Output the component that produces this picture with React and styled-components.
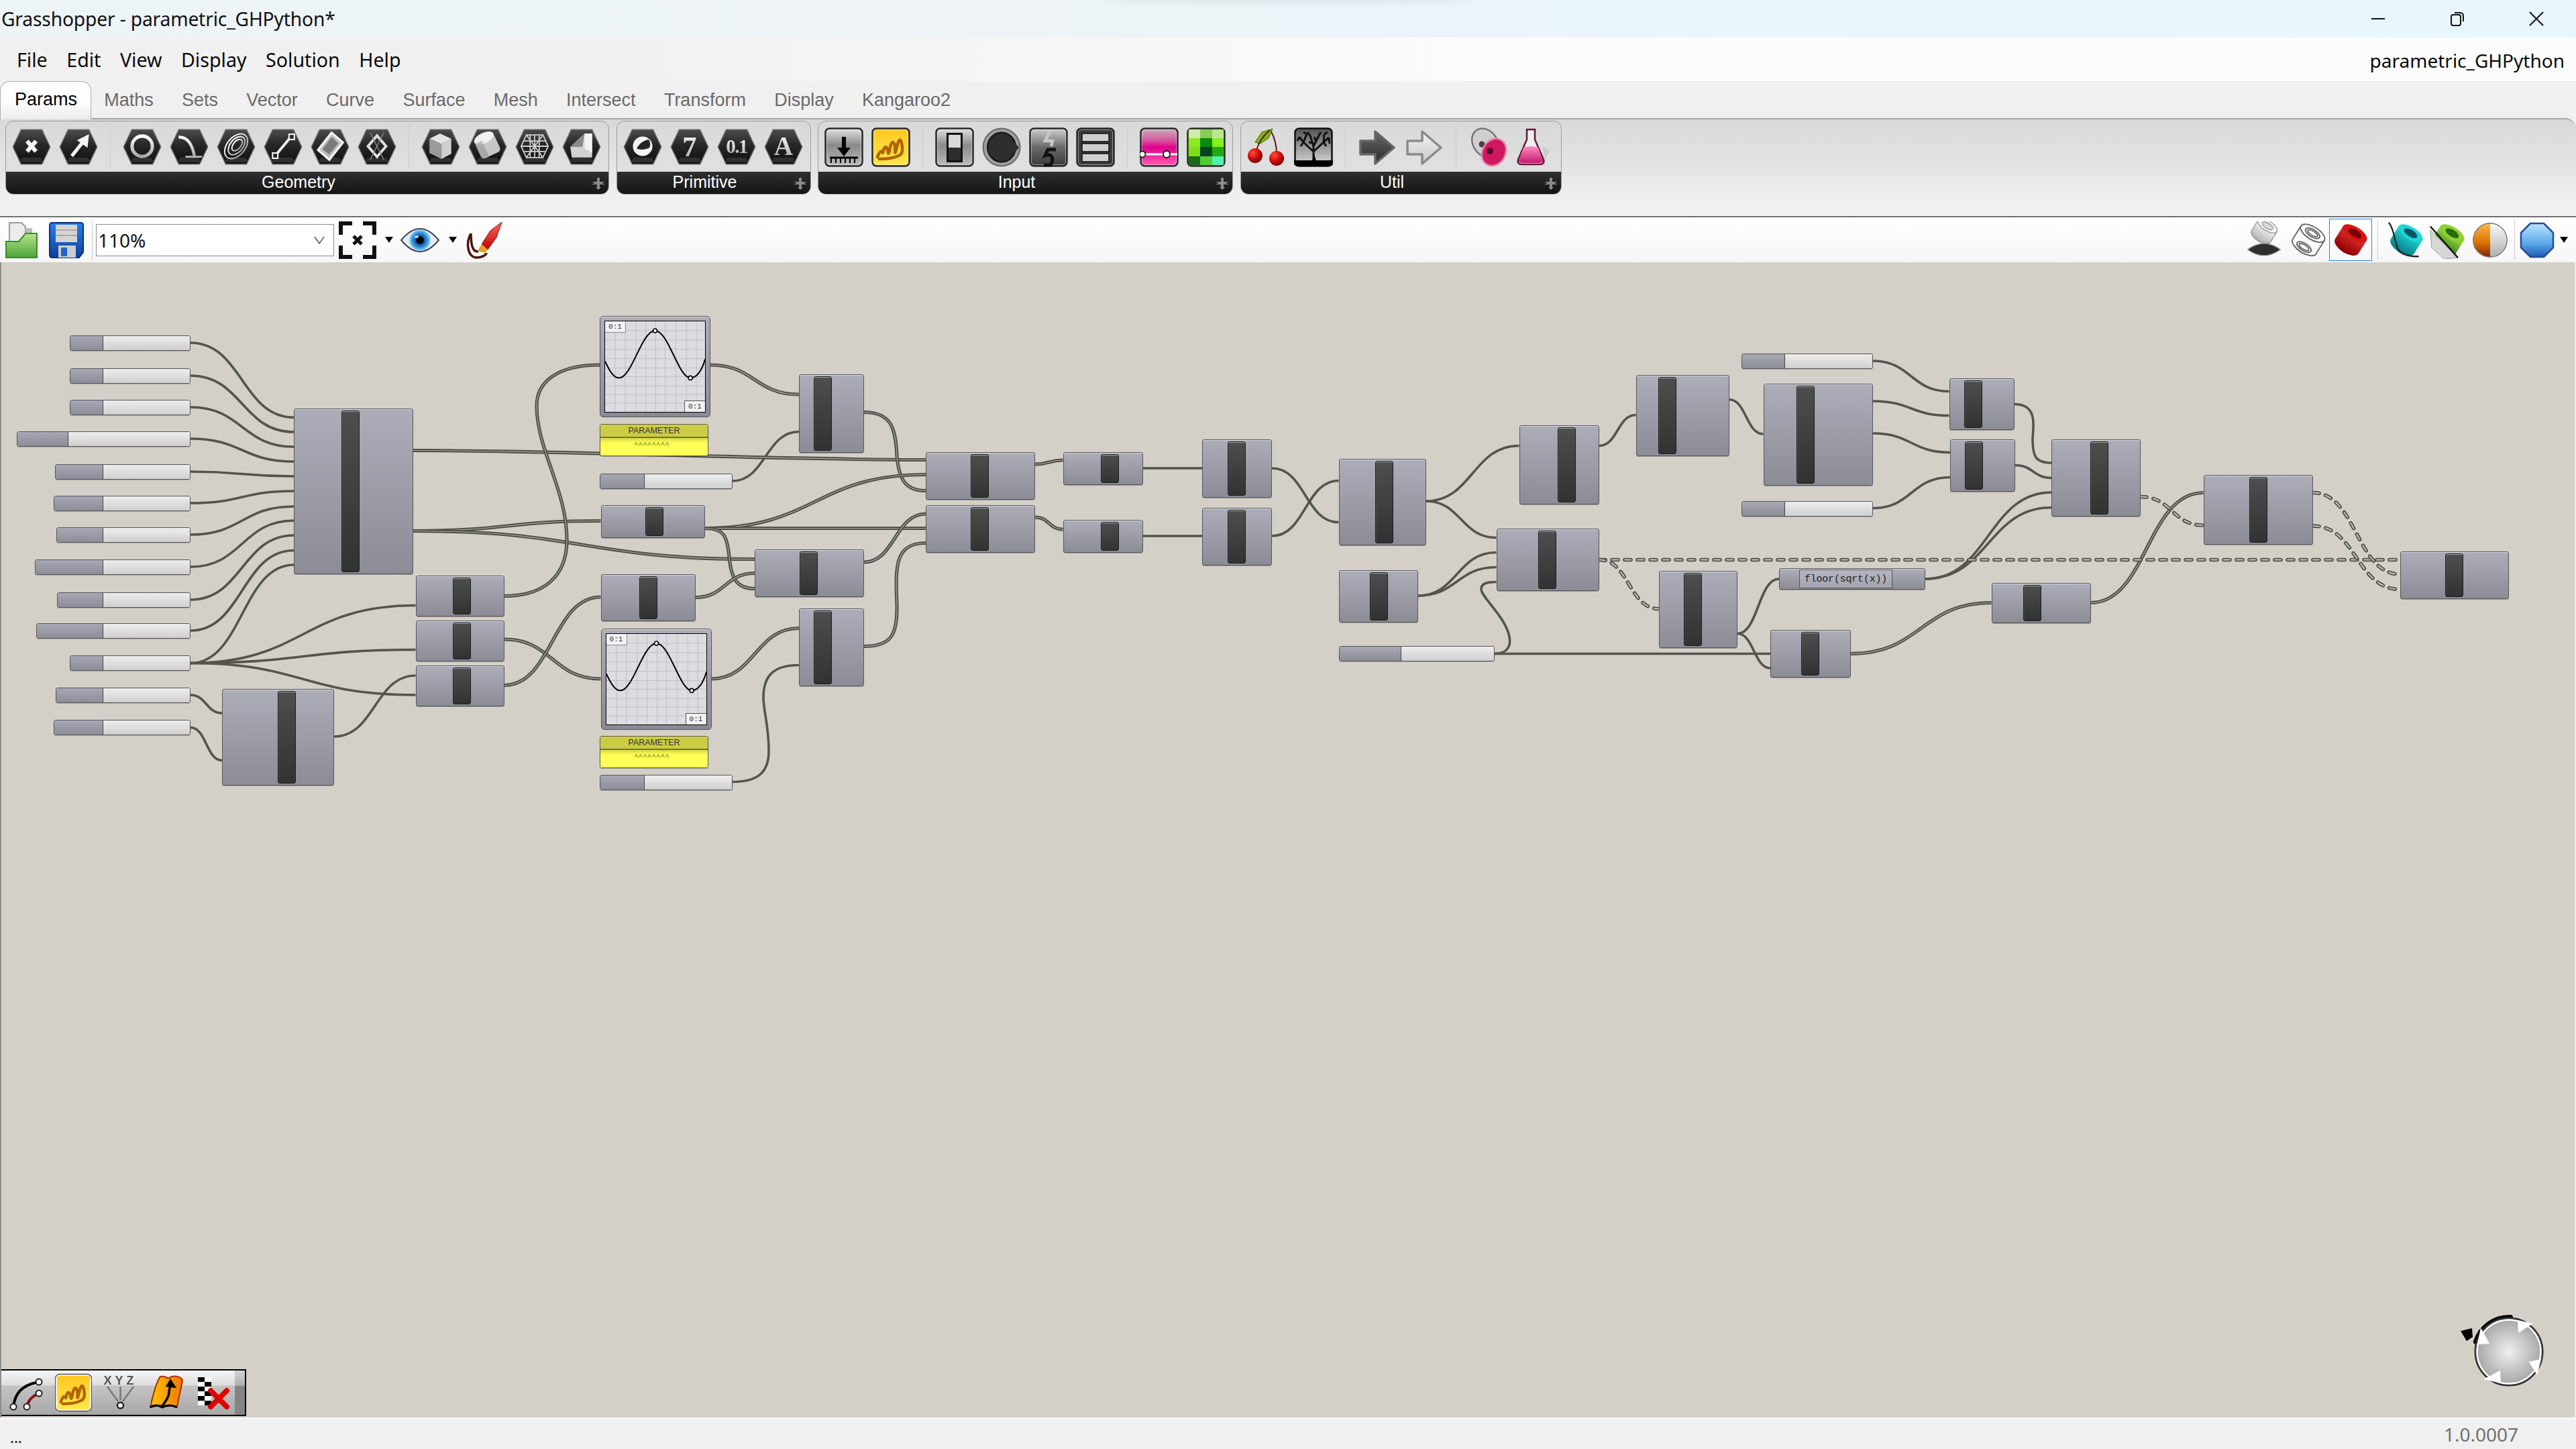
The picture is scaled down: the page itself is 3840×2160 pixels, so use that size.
import React from "react";
import styled, { createGlobalStyle } from "styled-components";

const Global = createGlobalStyle`
  html, body { margin: 0; padding: 0; width: 3840px; height: 2160px; overflow: hidden; background: #f0f0f0; }
  body { font-family: "Noto Sans", "Open Sans", sans-serif; }
`;

const CANVAS_TOP = 391;

const Window = styled.div`
  width: 3840px; height: 2160px; display: flex; flex-direction: column; overflow: hidden; position: relative;
`;
const TitleBar = styled.header`
  height: 56px; flex: none; display: flex; align-items: center; position: relative; overflow: hidden;
  background: linear-gradient(90deg, #edf4f8 0%, #eef4f8 40%, #e8f6fb 75%, #e7f7fb 100%);
  &::before {
    content: ""; position: absolute; left: 1640px; top: -10px; width: 560px; height: 14px;
    background: rgba(120,130,130,.16); filter: blur(6px); border-radius: 50%;
  }
`;
const TitleText = styled.span`
  margin-left: 2px; font-size: 28.2px; color: #111; line-height: 58px; white-space: nowrap; letter-spacing: -.15px;
`;
const WinControls = styled.div`
  margin-left: auto; display: flex; align-items: center; gap: 96px; padding-right: 48px;
`;
const WinIcon = styled.svg`
  width: 22px; height: 22px; fill: none; stroke: #111; stroke-width: 2; display: block;
`;
const MenuBar = styled.nav`
  height: 65px; flex: none; box-sizing: border-box; display: flex; align-items: center; padding: 2px 0 0 25px; gap: 28.5px; font-size: 28.6px; color: #0a0a0a;
  background: linear-gradient(90deg, #f0f0f0 0%, #f1f1f1 24%, #fcfcfc 60%, #fcfcfc 100%);
`;
const MenuItem = styled.span` line-height: 1; `;
const MenuRight = styled.span` margin-left: auto; padding-right: 17px; font-size: 28px; `;
const Tabs = styled.div`
  height: 55px; flex: none; display: flex; background: #f0f0f0; font-family: "Liberation Sans", Arial, sans-serif; font-size: 27px; position: relative; z-index: 2;
`;
const Tab = styled.div`
  height: ${p => (p.$active ? 57 : 55)}px; box-sizing: border-box; display: flex; align-items: center;
  padding: ${p => (p.$active ? "0 21px 4px 21px" : "1px 21.15px 0 21.15px")}; margin-right: ${p => (p.$active ? -2 : 0)}px;
  color: ${p => (p.$active ? "#000" : "#6a6a6a")};
  ${p => p.$active && `
    background: linear-gradient(180deg, #fff 0%, #fdfdfd 55%, #eaeaea 100%);
    border: 1px solid #aeaeae; border-bottom: none; border-radius: 14px 14px 0 0; width: 136px;
  `}
`;
const Ribbon = styled.section`
  height: 146px; flex: none; box-sizing: border-box; border-top: 2px solid #a6a6a6; border-top-right-radius: 16px;
  background: linear-gradient(180deg, #d8d8d8 0%, #e6e6e6 55%, #f0f0f0 82%, #f0f0f0 100%);
  padding: 2px 0 0 8px; display: flex; gap: 10.5px; align-items: flex-start;
`;
const Group = styled.div`
  width: ${p => p.$w}px; height: 110px; box-sizing: border-box; border: 1px solid #9c9c9c; border-radius: 12px; overflow: hidden;
  display: flex; flex-direction: column; background: linear-gradient(180deg, #d9d9d9, #e3e3e3);
`;
const GroupBody = styled.div`
  height: 75px; flex: none; display: flex; align-items: center; padding-left: ${p => p.$pad || 9}px;
`;
const Section = styled.div` display: flex; gap: ${p => p.$gap ?? 12}px; `;
const Sep = styled.i` width: 1px; height: 66px; background: #cbcbcb; margin: 0 ${p => p.$m ?? 18}px; flex: none; `;
const GroupFoot = styled.div`
  flex: 1; display: flex; align-items: center; justify-content: center; padding: 0 26px 3px 0; position: relative;
  background: linear-gradient(180deg, #2f2f2f, #141414); color: #fff; font-family: "Liberation Sans", Arial, sans-serif; font-size: 25px;
`;
const FootPlus = styled.svg`
  position: absolute; right: 6px; top: 9px; width: 18px; height: 18px; fill: #8b8b8b; filter: blur(.5px);
`;
const HexSvg = styled.svg`
  width: 58px; height: 54px; display: block; flex: none; filter: blur(.45px);
`;
const BtnSvg = styled.svg`
  width: 58px; height: 59px; display: block; flex: none; filter: blur(.4px); margin-top: 2px;
`;
const Toolbar = styled.div`
  height: 69px; flex: none; box-sizing: border-box; border-top: 2px solid #707070; display: flex; align-items: center; padding-left: 8px; position: relative;
  background: linear-gradient(180deg, #fff 0%, #f6f6f6 100%);
`;
const ToolIcon = styled.svg`
  width: ${p => p.$w}px; height: ${p => p.$h || 56}px; display: block; flex: none; margin-left: ${p => p.$ml || 0}px; filter: blur(.4px);
`;
const ToolSep = styled.i` width: 1px; height: 60px; background: #cfcfcf; flex: none; margin-left: ${p => p.$ml || 0}px; `;
const Combo = styled.div`
  width: 355px; height: 48px; box-sizing: border-box; margin-left: 5px; border: 1px solid #8d8d8d; background: #fff; position: relative;
  display: flex; align-items: center; padding-left: 2px; font-size: 28px; color: #111; font-family: "Noto Sans", sans-serif;
`;
const ComboChevron = styled.svg`
  position: absolute; right: 13px; top: 15px; width: 16px; height: 16px; fill: none; stroke: #555; stroke-width: 1.5;
`;
const Drop = styled.i`
  width: 0; height: 0; border: 6px solid transparent; border-top: 9px solid #000; border-bottom: none; flex: none; margin-left: ${p => p.$ml || 0}px;
`;
const ToolRight = styled.div` margin-left: auto; display: flex; align-items: center; padding-right: 12px; `;
const Selected = styled.div`
  width: 64px; height: 63px; box-sizing: border-box; border: 1px solid #1e88e5; display: flex; align-items: center; justify-content: center; margin-left: 1px;
`;
const Canvas = styled.main`
  flex: 1; position: relative; overflow: hidden; background: #d4d0c8;
  box-shadow: inset 2px 0 0 #8d8d8d, inset -2px 0 0 #ececec;
`;
const WireLayer = styled.svg`
  position: absolute; left: 0; top: 0; width: 3840px; height: 1722px; fill: none;
`;
const NodeBox = styled.div`
  position: absolute; left: ${p => p.$x}px; top: ${p => p.$y}px; width: ${p => p.$w}px; height: ${p => p.$h}px; box-sizing: border-box;
  background: linear-gradient(180deg, #adadb9 0%, #8c8c97 100%);
  border: 1px solid #55555a; border-radius: 3px; padding: 2px 0;
  box-shadow: inset 0 1px 0 rgba(255,255,255,.55), 0 1px 0 rgba(60,60,60,.35);
`;
const Bar = styled.div`
  margin-left: ${p => p.$o}px; width: 27px; height: 100%; box-sizing: border-box; border: 1px solid #1c1c1c; border-radius: 3px;
  background: linear-gradient(180deg, #4e4e4e 0%, #323232 100%); box-shadow: inset 0 1px 0 rgba(255,255,255,.5), inset 1px 0 0 rgba(255,255,255,.08);
`;
const SliderBox = styled.div`
  position: absolute; left: ${p => p.$x}px; top: ${p => p.$y}px; width: ${p => p.$w}px; height: ${p => p.$h}px; box-sizing: border-box;
  border: 1px solid #55555a; border-radius: 3px; overflow: hidden; display: flex;
  box-shadow: 0 1px 0 rgba(60,60,60,.25);
`;
const SliderLeft = styled.div`
  width: ${p => p.$w}px; flex: none; border-right: 1px solid #444; background: linear-gradient(180deg, #a8a8b4, #8d8d99);
`;
const SliderRight = styled.div` flex: 1; background: linear-gradient(180deg, #ededed, #cfcfcf); `;
const GraphBox = styled.div`
  position: absolute; left: ${p => p.$x}px; top: ${p => p.$y}px; width: 165px; height: 151px; box-sizing: border-box;
  border: 1px solid #55555a; border-radius: 5px; padding: 6px; display: flex;
  background: linear-gradient(180deg, #aeaeba, #898995); box-shadow: inset 0 1px 0 rgba(255,255,255,.6);
`;
const GraphFrame = styled.div`
  flex: 1; position: relative; border: 1.5px solid #000; background: #dcdce1; font-family: "Liberation Mono", monospace; font-size: 11px; color: #333;
`;
const GraphTag = styled.span`
  position: absolute; width: 31px; height: 17px; box-sizing: border-box; background: #f1f1f3; display: flex; align-items: center; justify-content: center; letter-spacing: 0;
  ${p => (p.$end ? "right: 0; bottom: 0; border-top: 1px solid #555; border-left: 1px solid #555;" : "left: 0; top: 0; border-bottom: 1px solid #888; border-right: 1px solid #888;")}
`;
const GraphPlot = styled.svg` position: absolute; inset: 0; width: 100%; height: 100%; fill: none; `;
const PanelBox = styled.div`
  position: absolute; left: ${p => p.$x}px; top: ${p => p.$y}px; width: 162px; height: 48px; box-sizing: border-box; border: 1px solid #5f5f45; border-radius: 3px; overflow: hidden;
  display: flex; flex-direction: column; text-align: center; font-family: "Liberation Sans", sans-serif; box-shadow: 0 1px 1px rgba(60,60,60,.35);
`;
const PanelHead = styled.div`
  height: 20px; flex: none; box-sizing: border-box; background: #cccb47; border-bottom: 2px solid #74742c; font-size: 12.5px; line-height: 18px; color: #333;
`;
const PanelBody = styled.div`
  flex: 1; background: linear-gradient(180deg, #d6d64c 0%, #ffff55 30%, #ffff55 100%); font-size: 12px; line-height: 22px; color: #6f8a10; letter-spacing: 1px; padding-right: 6px;
`;
const ExprBox = styled(NodeBox)` padding: 1px 0; `;
const ExprInner = styled.div`
  margin-left: 29px; width: 139px; height: 100%; box-sizing: border-box; border: 1px solid #55555a; background: linear-gradient(180deg, #b6b6c2, #a4a4b0);
  font-family: "Liberation Mono", monospace; font-size: 15px; color: #222; display: flex; align-items: center; justify-content: center; letter-spacing: -.2px;
`;
const Floating = styled.div`
  position: absolute; left: 2px; bottom: 2px; width: 365px; height: 70px; box-sizing: border-box; border: 2px solid #000; border-left: none; display: flex; align-items: center; padding-left: 10px; gap: 15px;
  background: linear-gradient(180deg, #f7f7f7 0%, #dcdcdc 33%, #c4c4c4 35%, #a8a8a8 100%);
  &::after { content: ""; position: absolute; right: 0; top: 0; bottom: 0; width: 15px; background: linear-gradient(180deg, #d4d4d4 0%, #b0b0b0 34%, #858585 35%, #858585 100%); }
`;
const FloatIcon = styled.svg` width: 55px; height: 58px; flex: none; display: block; filter: blur(.5px); `;
const Compass = styled.svg` position: absolute; left: 3660px; top: ${1950 - CANVAS_TOP}px; width: 140px; height: 130px; `;
const StatusBar = styled.footer`
  height: 47px; flex: none; box-sizing: border-box; border-top: 2px solid #fafafa; background: #f0f0f0; display: flex; align-items: center; padding: 0 86px 0 15px; justify-content: space-between; font-size: 28px;
`;
const StatusDots = styled.span` color: #111; font-size: 22px; letter-spacing: 0; margin-top: 8px; `;
const StatusVersion = styled.span` color: #707070; `;

const Defs = styled.svg` position: absolute; width: 0; height: 0; `;

const grad = (id, stops, x2 = 0, y2 = 1) => (
  <linearGradient id={id} x1="0" y1="0" x2={x2} y2={y2} key={id}>
    {stops.map(([o, c], i) => <stop key={i} offset={o} stopColor={c} />)}
  </linearGradient>
);

const SharedDefs = () => (
  <Defs aria-hidden="true">
    <defs>
      {grad("hexF", [[0, "#4a4a4a"], [.45, "#262626"], [1, "#0f0f0f"]])}
      {grad("hexG", [[0, "#ffffff"], [1, "#a8a8a8"]])}
      {grad("btnG", [[0, "#e2e2e2"], [.45, "#8a8a8a"], [1, "#bcbcbc"]])}
      {grad("yel", [[0, "#ffc820"], [1, "#ffe850"]])}
      {grad("pink", [[0, "#c9b0bd"], [.3, "#d65ba0"], [.5, "#e0008c"], [1, "#ff60b4"]])}
      {grad("grayDown", [[0, "#cfcfcf"], [.5, "#6a6a6a"], [1, "#3a3a3a"]])}
      {grad("treeB", [[0, "#525252"], [.5, "#9a9a9a"], [1, "#dcdcdc"]])}
      {grad("arrD", [[0, "#666"], [1, "#2c2c2c"]])}
      {grad("arrL", [[0, "#f2f2f2"], [1, "#c8c8c8"]])}
      {grad("red", [[0, "#e83030"], [1, "#8a0000"]])}
      {grad("teal", [[0, "#1fd6d6"], [1, "#067a80"]])}
      {grad("green", [[0, "#9ee040"], [1, "#1d6a0a"]])}
      {grad("silver", [[0, "#fafafa"], [1, "#b0b0b0"]])}
      {grad("orange", [[0, "#ffb84a"], [.6, "#d87000"], [1, "#7e2400"]])}
      {grad("blue", [[0, "#bfe4ff"], [.6, "#5aa8ea"], [1, "#1e5cb4"]])}
      {grad("flaskP", [[0, "#ff8ec4"], [1, "#c8186e"]])}
      {grad("map", [[0, "#ffc400"], [1, "#f07800"]], 1, 0)}
      {grad("folderG", [[0, "#b8e48a"], [1, "#4aa436"]])}
      {grad("floppy", [[0, "#2a80e8"], [1, "#0d3f9c"]])}
      {grad("brush", [[0, "#ff6a5a"], [1, "#c00000"]])}
      <radialGradient id="cmp" cx=".5" cy=".5" r=".5">
        <stop offset="0" stopColor="#f0f0f0" /><stop offset="1" stopColor="#a4a4a4" />
      </radialGradient>
      <radialGradient id="iris" cx=".5" cy=".5" r=".5">
        <stop offset="0" stopColor="#000" /><stop offset=".3" stopColor="#000" /><stop offset=".42" stopColor="#1a5ab0" /><stop offset=".75" stopColor="#3aa0e0" /><stop offset="1" stopColor="#a8dcf4" />
      </radialGradient>
      <radialGradient id="cher" cx=".35" cy=".3" r=".7">
        <stop offset="0" stopColor="#ff5040" /><stop offset=".6" stopColor="#d00808" /><stop offset="1" stopColor="#7a0000" />
      </radialGradient>
    </defs>
  </Defs>
);

const Hex = ({ children }) => (
  <HexSvg viewBox="0 0 58 54">
    <polygon points="13,0.5 45,0.5 57.5,27 45,53.5 13,53.5 0.5,27" fill="#6b6b6b" />
    <polygon points="14,2 44,2 56,27 44,52 14,52 2,27" fill="url(#hexF)" />
    <polygon points="15,43 43,43 47,50 11,50" fill="#3a3a3a" opacity=".75" />
    <g transform="translate(29 26) scale(1.12) translate(-29 -27)">{children}</g>
  </HexSvg>
);

const S = { stroke: "url(#hexG)", fill: "none" };
const geo = [
  <g key="x" stroke="#f4f4f4" strokeWidth="5.5"><path d="M23 20L35 34M35 20L23 34" /></g>,
  <g key="a"><path d="M20 40L36 20" stroke="#f4f4f4" strokeWidth="4.5" /><polygon points="43,11 41,29 27,19" fill="#f4f4f4" /></g>,
  <circle key="c" cx="29" cy="27" r="13.5" {...S} strokeWidth="4.5" />,
  <g key="arc"><path d="M15 15C26 14 33 24 36 40" {...S} strokeWidth="4" /><path d="M24 41L46 41" stroke="#bbb" strokeWidth="2.5" /></g>,
  <g key="sp" {...S} strokeWidth="1.8" transform="rotate(-50 29 27)"><ellipse cx="29" cy="27" rx="19" ry="12" /><ellipse cx="30" cy="27" rx="14" ry="8.5" /><ellipse cx="31" cy="27" rx="9" ry="5" /></g>,
  <g key="seg"><path d="M19 39L39 15" stroke="#eee" strokeWidth="3.5" /><rect x="37" y="11" width="7" height="7" fill="#222" stroke="#eee" strokeWidth="2" /><rect x="15" y="36" width="7" height="7" fill="#222" stroke="#eee" strokeWidth="2" /></g>,
  <g key="srf"><polygon points="31,9 46,22 28,45 13,32" fill="#bcbcbc" stroke="#f2f2f2" strokeWidth="3" /><polygon points="31,15 40,23 28,38 19,31" fill="#7c7c7c" /></g>,
  <g key="dia" fill="none" stroke="#e0e0e0"><polygon points="29,13 41,27 29,41 17,27" strokeWidth="3.5" /><path d="M20 9L38 45M38 9L20 45" strokeWidth="1.2" stroke="#888" /></g>,
  <g key="box"><polygon points="14,17 28,10 43,17 30,24" fill="#e4e4e4" /><polygon points="14,17 30,24 30,44 14,36" fill="#9a9a9a" /><polygon points="30,24 43,17 43,37 30,44" fill="#d0d0d0" /></g>,
  <g key="cyl" transform="rotate(-25 29 27)"><rect x="15" y="14" width="28" height="26" rx="5" fill="#c6c6c6" /><ellipse cx="29" cy="15" rx="14" ry="7" fill="#f0f0f0" /><rect x="15" y="17" width="10" height="22" fill="#8a8a8a" opacity=".5" /></g>,
  <g key="msh" stroke="#cfcfcf" strokeWidth="1.6" fill="none"><polygon points="18,12 40,12 47,27 40,42 18,42 11,27" /><path d="M11 27H47M15 20H43M15 34H43M23 12V42M29 12V42M35 12V42M18 12L40 42M40 12L18 42" /></g>,
  <g key="wed"><polygon points="33,10 43,10 43,42 16,42 14,28" fill="#d2d2d2" /><polygon points="33,10 14,28 30,28" fill="#8a8a8a" /><polygon points="33,10 43,10 43,36 33,30" fill="#f2f2f2" /></g>,
];
const T = styled.text` font-family: "Liberation Serif", serif; font-weight: 700; `;
const prim = [
  <g key="b"><circle cx="29" cy="27" r="13" fill="#f4f4f4" /><path d="M21 30C24 24 30 19 37 18A11 11 0 0 1 38 29C34 31 26 33 21 30Z" fill="#252525" /></g>,
  <T key="7" x="29" y="40" fontSize="38" textAnchor="middle" fill="url(#hexG)">7</T>,
  <T key="d" x="29" y="36" fontSize="26" textAnchor="middle" fill="url(#hexG)" letterSpacing="-1.5">0.1</T>,
  <T key="A" x="29" y="39" fontSize="35" textAnchor="middle" fill="url(#hexG)">A</T>,
];

const Btn = ({ children, bg = "url(#btnG)" }) => (
  <BtnSvg viewBox="0 0 58 59">
    <rect x="1.5" y="1.5" width="55" height="56" rx="6" fill={bg} stroke="#2a2a2a" strokeWidth="2.5" />
    <rect x="3.5" y="3.5" width="51" height="52" rx="4" fill="none" stroke="#fff" strokeOpacity=".45" strokeWidth="1" />
    {children}
  </BtnSvg>
);

const Scribble = ({ w = 4.5 }) => (
  <path d="M9 44C12 36 15 33 17 38C18 32 21 24 24 33C25 38 25 42 27 35C28 26 32 16 35 27C36 36 34 42 37 33C39 24 42 12 45 23C47 33 47 39 41 42C33 46 22 47 12 47" fill="none" stroke="#b06400" strokeWidth={w} strokeLinejoin="round" strokeLinecap="round" />
);

const inputIcons = [
  [
    <Btn key="1"><path d="M29 14V34" stroke="#000" strokeWidth="6" /><polygon points="19,30 39,30 29,43" fill="#000" /><path d="M8 45H50" stroke="#000" strokeWidth="3" /><path d="M10 46V53M17 46V53M24 46V53M31 46V53M38 46V53M45 46V53" stroke="#000" strokeWidth="2" /></Btn>,
    <Btn key="2" bg="url(#yel)"><Scribble /></Btn>,
  ],
  [
    <Btn key="3"><rect x="17" y="8" width="24" height="44" fill="#111" /><rect x="20" y="11" width="18" height="19" fill="#d8d8d8" /><rect x="20" y="30" width="18" height="19" fill="#2e2e2e" /></Btn>,
    <BtnSvg key="4" viewBox="0 0 58 59"><ellipse cx="29" cy="29.5" rx="27.5" ry="28" fill="#9c9c9c" stroke="#6a6a6a" strokeWidth="2" /><ellipse cx="29" cy="29.5" rx="21" ry="22" fill="#2e2e2e" stroke="#111" strokeWidth="2" /><polygon points="48,22 55,30 48,38" fill="#2e2e2e" /></BtnSvg>,
    <Btn key="5" bg="url(#grayDown)"><path d="M32 4L24 20H35L33 28" fill="none" stroke="#c8c8c8" strokeWidth="4.5" /><path d="M40 33H28L24 42C34 38 38 46 32 56H22" fill="none" stroke="#111" strokeWidth="5" /></Btn>,
    <Btn key="6" bg="#3c3c3c"><g fill="#cfcfcf" stroke="#111" strokeWidth="1.5"><rect x="9" y="9" width="40" height="12" /><rect x="9" y="24" width="40" height="12" /><rect x="9" y="39" width="40" height="12" /></g></Btn>,
  ],
  [
    <Btn key="7" bg="url(#pink)"><path d="M2 40H56" stroke="#fff" strokeWidth="3" /><circle cx="4" cy="40" r="4.5" fill="#fff" stroke="#222" strokeWidth="2" /><circle cx="40" cy="40" r="5" fill="#fff" stroke="#222" strokeWidth="2" /></Btn>,
    <BtnSvg key="8" viewBox="0 0 58 59">
      <rect x="1.5" y="1.5" width="55" height="56" rx="6" fill="#88ee22" stroke="#2a2a2a" strokeWidth="2.5" />
      <path d="M3 3h17v13h-17z" fill="#cceeaa" /><path d="M38 3h17v13h-17z" fill="#b8e88c" /><path d="M20 3h18v13h-18z" fill="#88cc55" />
      <path d="M20 16h18v13h-18z" fill="#0a8a0a" /><path d="M3 16h17v13h-17z" fill="#8eea1e" /><path d="M38 16h17v13h-17z" fill="#84f020" />
      <path d="M20 29h18v14h-18z" fill="#042" /><path d="M38 29h17v14h-17z" fill="#22aa10" /><path d="M3 29h17v14h-17z" fill="#7be01c" />
      <path d="M3 43h17v13h-17z" fill="#1a6a1a" /><path d="M20 43h18v13h-18z" fill="#55cc33" /><path d="M38 43h17v13h-17z" fill="#55f0b0" />
    </BtnSvg>,
  ],
];
const Arrow = ({ fill, stroke }) => (
  <BtnSvg viewBox="0 0 58 59"><polygon points="4,20 26,20 26,6 54,30 26,54 26,40 4,40" fill={fill} stroke={stroke} strokeWidth="3.5" strokeLinejoin="round" /></BtnSvg>
);
const utilIcons = [
  [
    <BtnSvg key="c" viewBox="0 0 58 59">
      <polygon points="12,22 22,7 38,2 32,16 20,24" fill="#7cb51c" stroke="#3a6a08" strokeWidth="1" />
      <path d="M34 4C22 14 16 26 14 34M36 6C42 18 44 28 44 38" fill="none" stroke="#6a1414" strokeWidth="2" />
      <circle cx="12" cy="42" r="11" fill="url(#cher)" /><circle cx="44" cy="46" r="11" fill="url(#cher)" />
    </BtnSvg>,
    <BtnSvg key="t" viewBox="0 0 58 59">
      <rect x="1.5" y="1.5" width="55" height="56" rx="6" fill="url(#treeB)" stroke="#111" strokeWidth="2.5" />
      <path d="M0 49H58V53Q58 58 52 58H6Q0 58 0 53Z" fill="#000" />
      <path d="M29 50V28M29 36L14 22M29 36L44 22M29 28L24 12M29 28L37 12M14 22L8 14M14 22L19 10M44 22L52 15M44 22L45 10M24 12L20 7M37 12L40 7M19 10L14 7M8 14L5 20M45 10L50 7M52 15L53 24M33 22L30 14M22 22L30 24M14 22L10 28M44 22L48 28" stroke="#111" strokeWidth="3" fill="none" />
      <path d="M27 50L33 50L30 40Z" fill="#000" />
    </BtnSvg>,
  ],
  [<Arrow key="d" fill="url(#arrD)" stroke="#666" />, <Arrow key="l" fill="url(#arrL)" stroke="#8a8a8a" />],
  [
    <BtnSvg key="dsk" viewBox="0 0 58 59">
      <ellipse cx="25" cy="23" rx="18" ry="23" transform="rotate(-35 25 23)" fill="#cfcfcf" stroke="#777" strokeWidth="2.5" />
      <circle cx="20" cy="25" r="4.5" fill="#444" />
      <ellipse cx="38" cy="37" rx="17" ry="21" transform="rotate(30 38 37)" fill="#d01860" stroke="#e880a8" strokeWidth="2.5" />
      <circle cx="32" cy="35" r="5" fill="#5a0028" />
    </BtnSvg>,
    <BtnSvg key="f" viewBox="0 0 58 59">
      <path d="M21 3H33V18L46 48Q48 55 40 55H14Q6 55 8 48L21 18Z" fill="#eee" stroke="#5a1a3a" strokeWidth="2.5" />
      <path d="M16 30Q27 26 38 30L45 49Q46 53 40 53H14Q8 53 9 49Z" fill="url(#flaskP)" />
      <path d="M44 28L56 34L48 48Z" fill="#bbb" opacity=".5" />
    </BtnSvg>,
  ],
];

const Plus = () => (
  <FootPlus viewBox="0 0 18 18"><path d="M7 0H11V6H18L14 9L18 9V10H11V14H13L9 18L5 14H7V10H0V9L4 9L0 6H7Z" /></FootPlus>
);

const RibbonGroup = ({ w, title, pad, children }) => (
  <Group $w={w}>
    <GroupBody $pad={pad}>{children}</GroupBody>
    <GroupFoot>{title}<Plus /></GroupFoot>
  </Group>
);

const Cyl = ({ top, body, hole = "#333", stroke = "none", sw = 0 }) => (
  <g transform="rotate(32 30 30)">
    <path d="M8 17V41Q8 46 14 49Q30 56 46 49Q52 46 52 41V17Z" fill={body} stroke={stroke} strokeWidth={sw} />
    <ellipse cx="30" cy="17" rx="22" ry="10" fill={top} stroke={stroke} strokeWidth={sw} />
    <ellipse cx="30" cy="17" rx="12" ry="5.5" fill={hole} stroke={stroke} strokeWidth={sw} />
  </g>
);

// ---- canvas data (page coordinates) ----
const N = (x1, y1, x2, y2, b) => ({ x1, y1, x2, y2, b });
const nodes = [
  N(438, 609, 616, 855.5, 508),
  N(619.5, 858, 751.5, 919, 674), N(619.5, 925, 751.5, 985.5, 674), N(619.5, 992, 751.5, 1053, 674),
  N(331, 1027, 498, 1171, 413),
  N(1191, 558, 1288, 675, 1212), N(895.5, 752.5, 1051, 801.5, 961), N(1125, 818.5, 1288, 889.5, 1191),
  N(895.5, 855.5, 1037, 926, 952), N(1191, 907, 1288, 1022.5, 1212),
  N(1380, 673.5, 1543, 744.5, 1446), N(1380, 752.5, 1543, 823.5, 1446),
  N(1584.5, 673.5, 1704, 722.5, 1640), N(1584.5, 774.5, 1704, 823.5, 1640),
  N(1792, 655, 1896, 741.5, 1829), N(1792, 756.5, 1896, 842.5, 1829),
  N(1995.5, 683.5, 2125.5, 812.5, 2049), N(1995.5, 849.5, 2113.5, 928, 2041),
  N(2264.5, 634, 2384, 751.5, 2320.5), N(2230.5, 788, 2384, 881, 2292),
  N(2438.5, 559, 2577.5, 679.5, 2471), N(2628.5, 571.5, 2792, 723.5, 2677),
  N(2472.5, 850.5, 2590, 965.5, 2509), N(2639, 939, 2759, 1009.5, 2683.5),
  N(2905.5, 563.5, 3003, 641, 2927), N(2907, 655, 3004, 732.5, 2928),
  N(3058, 655, 3191, 769.5, 3115), N(3284.5, 707.5, 3448, 811.5, 3352),
  N(2968.5, 868.5, 3116.5, 928.5, 3015), N(3577.5, 821.5, 3740, 892.5, 3643.5),
];
const Sl = (x1, d, x2, y, h = 23) => ({ x1, d, x2, y, h });
const sliders = [
  Sl(103.5, 151.5, 284, 499.5), Sl(103.5, 151.5, 284, 548.5), Sl(103.5, 151.5, 284, 595.5), Sl(25, 99.5, 284, 642.5),
  Sl(81.5, 151.5, 284, 691.5), Sl(80, 151.5, 284, 738.5), Sl(83.5, 151.5, 284, 785.5), Sl(51.5, 151.5, 284, 833.5),
  Sl(84.5, 151.5, 284, 882.5), Sl(53.5, 151.5, 284, 928.5), Sl(103.5, 151.5, 284, 977), Sl(82.5, 151.5, 284, 1024.5), Sl(80, 151.5, 284, 1073),
  Sl(894, 958.5, 1091.5, 705.5), Sl(894, 958.5, 1091.5, 1154.5),
  Sl(2595.5, 2659, 2792, 527), Sl(2595.5, 2659, 2792, 746.5), Sl(1995.5, 2087, 2227.5, 963),
];

const bez = (x1, y1, x2, y2, k = .5) => {
  const c = Math.abs(x2 - x1) * k;
  return `M${x1} ${y1}C${x1 + c} ${y1} ${x2 - c} ${y2} ${x2} ${y2}`;
};
const A = 438, Ao = 284;
const single = [
  bez(Ao, 511, A, 622.3), bez(Ao, 560, A, 644), bez(Ao, 607, A, 666), bez(Ao, 654, A, 688), bez(Ao, 703, A, 710),
  bez(Ao, 750, A, 732), bez(Ao, 797, A, 755), bez(Ao, 845, A, 776), bez(Ao, 894, A, 798), bez(Ao, 940, A, 820.5), bez(Ao, 988.5, A, 842),
  bez(Ao, 988.5, 619.5, 902.5), bez(Ao, 988.5, 619.5, 968.5), bez(Ao, 988.5, 619.5, 1036),
  bez(Ao, 1036, 331, 1063), bez(Ao, 1084.5, 331, 1133.5),
  bez(498, 1098, 619.5, 1007),
  bez(1091.5, 717, 1191, 643.5), "M1091.5 1165.5C1125 1165.5 1146 1155 1146 1120C1146 1080 1138 1060 1138 1040C1138 1010 1150 991.5 1191 991.5",
  bez(1704, 698, 1792, 698), bez(1704, 799, 1792, 799),
  bez(1896, 698, 1995.5, 778.5), bez(1896, 799, 1995.5, 716.5),
  bez(2125.5, 747, 2264.5, 664.5), bez(2125.5, 747, 2230.5, 801.5),
  bez(2113.5, 888, 2230.5, 823.5), bez(2113.5, 888, 2230.5, 845.5),
  bez(2384, 664.5, 2438.5, 618.5), bez(2577.5, 595.5, 2628.5, 647),
  "M2227.5 974.5C2248 974.5 2254 962 2249 945C2240 915 2208 890 2208 878C2208 870 2216 867.5 2230.5 867.5",
  "M2227.5 974.5L2639 974.5",
  bez(2590, 944.5, 2652, 863), bez(2590, 944.5, 2639, 996),
  bez(2870, 863, 3058, 734), bez(2870, 863, 3058, 756.5),
  bez(2792, 538, 2905.5, 583.5), bez(2792, 598, 2905.5, 619.5), bez(2792, 646, 2907, 674.5), bez(2792, 757.5, 2907, 711.5),
  "M3003 602.5C3040 602.5 3030 640 3030 655C3030 680 3034 690 3058 690", bez(3004, 693.5, 3058, 712.5),
];
const list = [
  bez(616, 671.5, 1380, 685.5, .3), bez(616, 791.5, 895.5, 776.5), bez(616, 791.5, 1125, 833.5),
  "M751.5 888.5C810 888.5 845 860 845 805C845 730 800 670 800 605C800 570 830 544 894 544",
  bez(751.5, 953, 895.5, 1012), bez(751.5, 1021.5, 895.5, 890),
  bez(1059, 544, 1191, 588), "M1288 614.5C1330 614.5 1335 640 1337 680C1340 715 1350 731.5 1380 731.5",
  bez(1051, 787.5, 1380, 707.5), bez(1051, 787.5, 1380, 787.5),
  "M1051 787.5C1080 787.5 1084 800 1087 830C1090 865 1100 877.5 1125 877.5",
  bez(1037, 890.5, 1125, 854.5), bez(1288, 838, 1380, 766), "M1288 963.5C1330 963.5 1338 945 1337 900C1334 840 1336 809.5 1380 809.5",
  bez(1060, 1012, 1191, 936.5), bez(1543, 692, 1584.5, 686), bez(1543, 771, 1584.5, 789),
  bez(2759, 974.5, 2968.5, 898.5), bez(3116.5, 898.5, 3284.5, 734.5),
];
const tree = [
  "M2384 834.5L3577.5 834.5", bez(2384, 834.5, 2472.5, 907.5),
  bez(3191, 740.5, 3284.5, 783), bez(3448, 734.5, 3577.5, 856), bez(3448, 784, 3577.5, 878.5),
];

const gridV = [15, 30, 46, 61, 76, 90, 106, 122, 137];
const gridH = [14, 28, 42, 56, 70, 83, 97, 110, 123];

const Graph = ({ x, y }) => (
  <GraphBox $x={x} $y={y - CANVAS_TOP}>
    <GraphFrame>
      <GraphPlot viewBox="0 0 150 136" preserveAspectRatio="none">
        {gridV.map(v => <path key={v} d={`M${v} 0V136`} stroke="#bfbfc8" strokeWidth="1" />)}
        {gridH.map(v => <path key={v} d={`M0 ${v}H150`} stroke="#bfbfc8" strokeWidth="1" />)}
        <path d="M0 60C7 75 13 85 21 85C40 85 55 14 75 14C95 14 110 85 128 85C138 85 146 72 150 57" stroke="#000" strokeWidth="2" />
        <circle cx="75" cy="14" r="3" fill="#fff" stroke="#000" strokeWidth="1.6" />
        <circle cx="128" cy="85" r="3" fill="#fff" stroke="#000" strokeWidth="1.6" />
      </GraphPlot>
      <GraphTag>0:1</GraphTag>
      <GraphTag $end>0:1</GraphTag>
    </GraphFrame>
  </GraphBox>
);
const Panel = ({ x, y }) => (
  <PanelBox $x={x} $y={y - CANVAS_TOP}>
    <PanelHead>PARAMETER</PanelHead>
    <PanelBody>^^^^^^^^</PanelBody>
  </PanelBox>
);

export default function App() {
  return (
    <Window>
      <Global />
      <SharedDefs />
      <TitleBar>
        <TitleText>Grasshopper - parametric_GHPython*</TitleText>
        <WinControls>
          <WinIcon viewBox="0 0 22 22"><path d="M1 11H21" /></WinIcon>
          <WinIcon viewBox="0 0 22 22"><rect x="2" y="5" width="14" height="16" rx="3" /><path d="M7 2H15Q20 2 20 7V15" /></WinIcon>
          <WinIcon viewBox="0 0 22 22"><path d="M1 1L21 21M21 1L1 21" /></WinIcon>
        </WinControls>
      </TitleBar>
      <MenuBar>
        {["File", "Edit", "View", "Display", "Solution", "Help"].map(m => <MenuItem key={m}>{m}</MenuItem>)}
        <MenuRight>parametric_GHPython</MenuRight>
      </MenuBar>
      <Tabs>
        <Tab $active>Params</Tab>
        {["Maths", "Sets", "Vector", "Curve", "Surface", "Mesh", "Intersect", "Transform", "Display", "Kangaroo2"].map(t => <Tab key={t}>{t}</Tab>)}
      </Tabs>
      <Ribbon>
        <RibbonGroup w={900} title="Geometry">
          <Section>{geo.slice(0, 2).map((g, i) => <Hex key={i}>{g}</Hex>)}</Section>
          <Sep />
          <Section>{geo.slice(2, 8).map((g, i) => <Hex key={i}>{g}</Hex>)}</Section>
          <Sep />
          <Section>{geo.slice(8).map((g, i) => <Hex key={i}>{g}</Hex>)}</Section>
        </RibbonGroup>
        <RibbonGroup w={290} title="Primitive">
          <Section>{prim.map((g, i) => <Hex key={i}>{g}</Hex>)}</Section>
        </RibbonGroup>
        <RibbonGroup w={619} title="Input">
          <Section>{inputIcons[0]}</Section><Sep />
          <Section>{inputIcons[1]}</Section><Sep />
          <Section>{inputIcons[2]}</Section>
        </RibbonGroup>
        <RibbonGroup w={479} title="Util">
          <Section>{utilIcons[0]}</Section><Sep />
          <Section>{utilIcons[1]}</Section><Sep />
          <Section $gap={8}>{utilIcons[2]}</Section>
        </RibbonGroup>
      </Ribbon>
      <Toolbar>
        <ToolIcon $w={48} viewBox="0 0 48 56">
          <path d="M6 2H24L30 8V30H6Z" fill="#ececec" stroke="#999" strokeWidth="2" />
          <path d="M30 10H40V30H30Z" fill="#bbb" />
          <path d="M1 30H20L30 18H47V54H1Z" fill="url(#folderG)" stroke="#3a8a2a" strokeWidth="2" />
        </ToolIcon>
        <ToolIcon $w={54} $ml={16} viewBox="0 0 54 56">
          <path d="M2 6Q2 2 6 2H48Q52 2 52 6V46L46 54H6Q2 54 2 50Z" fill="url(#floppy)" stroke="#0a2f80" strokeWidth="2" />
          <rect x="11" y="5" width="32" height="26" fill="#d4d4d4" /><path d="M11 13H43M11 21H43" stroke="#aaa" strokeWidth="2" />
          <rect x="15" y="36" width="26" height="18" fill="#c8ccd4" /><rect x="19" y="39" width="9" height="13" fill="#1f66c8" />
        </ToolIcon>
        <ToolSep $ml={11} />
        <Combo>110%<ComboChevron viewBox="0 0 16 16"><path d="M1 3L8 13L15 3" /></ComboChevron></Combo>
        <ToolIcon $w={56} $ml={7} viewBox="0 0 56 56">
          <path d="M3 20V3H20M36 3H53V20M3 36V53H20M36 53H53V36" fill="none" stroke="#111" strokeWidth="6" />
          <path d="M22 22L34 34M34 22L22 34" stroke="#111" strokeWidth="5" />
        </ToolIcon>
        <Drop $ml={13} />
        <ToolIcon $w={58} $h={44} $ml={11} viewBox="0 0 58 44">
          <path d="M1 22Q29 -12 57 22Q29 56 1 22Z" fill="#e4ecf2" stroke="#445" strokeWidth="2" />
          <circle cx="29" cy="22" r="16" fill="url(#iris)" />
          <ellipse cx="24" cy="17" rx="3" ry="2" fill="#fff" opacity=".7" />
        </ToolIcon>
        <Drop $ml={14} />
        <ToolIcon $w={56} $ml={12} viewBox="0 0 56 56">
          <path d="M55 1L38 14L25 34L34 42L47 24Z" fill="url(#brush)" stroke="#8a1010" strokeWidth="1" />
          <path d="M25 34L19 44L30 47L34 42Z" fill="#e8a020" />
          <path d="M9 18C1 32 4 52 16 54C26 54 32 50 32 47M9 18C9 34 11 46 20 45" fill="none" stroke="#4a1410" strokeWidth="3.5" />
        </ToolIcon>
        <ToolRight>
          <ToolIcon $w={60} viewBox="0 0 60 60">
            <g transform="translate(6 -8) scale(.8)"><Cyl top="#f4f4f4" body="url(#silver)" hole="#d8d8d8" stroke="#888" sw="1.5" /></g>
            <path d="M4 45Q30 26 56 45Q30 64 4 45Z" fill="#2e2e2e" stroke="#888" strokeWidth="1.5" />
          </ToolIcon>
          <ToolIcon $w={60} $ml={6} viewBox="0 0 60 60">
            <g fill="none" stroke="#666" strokeWidth="2">
              <g transform="rotate(32 30 30)">
                <path d="M8 17V43Q8 46 14 49Q30 56 46 49Q52 46 52 43V17" /><ellipse cx="30" cy="17" rx="22" ry="10" /><ellipse cx="30" cy="17" rx="13" ry="6" /><ellipse cx="30" cy="17" rx="9" ry="3.5" /><ellipse cx="30" cy="43" rx="13" ry="6" /><ellipse cx="30" cy="43" rx="9" ry="3.5" />
              </g>
            </g>
          </ToolIcon>
          <Selected><ToolIcon $w={58} viewBox="0 0 60 60"><Cyl top="#d81414" body="url(#red)" hole="#7a0000" /></ToolIcon></Selected>
          <ToolSep $ml={8} />
          <ToolIcon $w={60} $ml={12} viewBox="0 0 60 60">
            <Cyl top="#1fd6d6" body="url(#teal)" hole="#056" />
            <path d="M2 2C12 14 10 32 18 46C24 54 36 56 50 56" fill="none" stroke="#222" strokeWidth="2.5" />
          </ToolIcon>
          <ToolIcon $w={60} $ml={2} viewBox="0 0 60 60">
            <Cyl top="#8ed030" body="url(#green)" hole="#2a6a10" />
            <path d="M2 14L4 42L24 60L46 58Z" fill="#d6d6d6" stroke="#999" strokeWidth="1" />
            <path d="M2 8L46 58" stroke="#111" strokeWidth="2.5" />
          </ToolIcon>
          <ToolIcon $w={60} $ml={3} viewBox="0 0 60 60">
            <path d="M30 3A27 27 0 0 0 30 57Z" fill="url(#orange)" />
            <path d="M30 3A27 27 0 0 1 30 57Z" fill="url(#silver)" />
            <circle cx="30" cy="30" r="27" fill="none" stroke="#777" strokeWidth="1.5" />
          </ToolIcon>
          <ToolSep $ml={6} />
          <ToolIcon $w={54} $ml={6} viewBox="0 0 54 56">
            <polygon points="17,3 37,3 51,17 51,39 37,53 17,53 3,39 3,17" fill="url(#blue)" stroke="#2a4a9a" strokeWidth="2.5" strokeLinejoin="round" />
          </ToolIcon>
          <Drop $ml={7} />
        </ToolRight>
      </Toolbar>
      <Canvas>
        <WireLayer viewBox={`0 ${CANVAS_TOP} 3840 1722`}>
          {single.map((d, i) => <path key={i} d={d} stroke="#55544d" strokeWidth="3.6" />)}
          {list.map((d, i) => (
            <g key={i}>
              <path d={d} stroke="#504f47" strokeWidth="5.2" />
              <path d={d} stroke="#aaa89e" strokeWidth="1.2" />
            </g>
          ))}
          {tree.map((d, i) => (
            <g key={i} strokeDasharray="9 10" strokeLinecap="round">
              <path d={d} stroke="#504f47" strokeWidth="5.6" />
              <path d={d} stroke="#c6c4ba" strokeWidth="2" />
            </g>
          ))}
        </WireLayer>
        {nodes.map((n, i) => (
          <NodeBox key={i} $x={n.x1} $y={n.y1 - CANVAS_TOP} $w={n.x2 - n.x1} $h={n.y2 - n.y1}>
            <Bar $o={n.b - n.x1} />
          </NodeBox>
        ))}
        {sliders.map((s, i) => (
          <SliderBox key={i} $x={s.x1} $y={s.y - CANVAS_TOP} $w={s.x2 - s.x1} $h={s.h}>
            <SliderLeft $w={s.d - s.x1} />
            <SliderRight />
          </SliderBox>
        ))}
        <Graph x={894} y={470.5} />
        <Graph x={895.5} y={936.5} />
        <Panel x={894} y={631.5} />
        <Panel x={894} y={1097} />
        <ExprBox $x={2652} $y={847 - CANVAS_TOP} $w={218} $h={32}>
          <ExprInner>floor(sqrt(x))</ExprInner>
        </ExprBox>
        <Floating>
          <FloatIcon viewBox="0 0 55 58">
            <path d="M8 50C10 30 22 18 42 14" fill="none" stroke="#000" strokeWidth="4" />
            <path d="M28 50C30 40 36 34 46 30" fill="none" stroke="#8a1010" strokeWidth="4" />
            <g fill="#fff" stroke="#222" strokeWidth="2"><circle cx="46" cy="13" r="4.5" /><circle cx="46" cy="30" r="4.5" /><circle cx="8" cy="50" r="4.5" /><circle cx="28" cy="50" r="4.5" /></g>
          </FloatIcon>
          <FloatIcon viewBox="0 0 58 59"><rect x="1.5" y="1.5" width="55" height="56" rx="6" fill="url(#yel)" stroke="#fff" strokeWidth="3" /><rect x=".5" y=".5" width="57" height="58" rx="7" fill="none" stroke="#555" strokeWidth="1.5" /><Scribble /></FloatIcon>
          <FloatIcon viewBox="0 0 55 58">
            <text x="27.5" y="17" textAnchor="middle" fontFamily="Liberation Sans" fontSize="18" fontWeight="700" letterSpacing="5" fill="#555">XYZ</text>
            <path d="M8 20L24 42M27.5 20V40M47 20L31 42" stroke="#777" strokeWidth="2.5" />
            <circle cx="27.5" cy="48" r="4.5" fill="#fff" stroke="#222" strokeWidth="2.5" />
          </FloatIcon>
          <FloatIcon viewBox="0 0 55 58">
            <path d="M16 6C22 2 26 8 30 7C36 3 46 4 50 10C48 24 44 38 42 50C34 46 26 52 20 48C14 46 8 52 2 50C6 36 8 20 16 6Z" fill="url(#map)" stroke="#a83000" strokeWidth="2" />
            <path d="M20 50C24 40 30 38 30 28L32 16" fill="none" stroke="#000" strokeWidth="3.5" />
            <polygon points="32,8 41,22 25,20" fill="#000" />
            <path d="M2 51C8 46 14 48 20 51C28 46 36 48 42 51" fill="none" stroke="#000" strokeWidth="3" />
          </FloatIcon>
          <FloatIcon viewBox="0 0 55 58">
            <rect x="3" y="6" width="20" height="42" fill="#000" />
            <g fill="#fff"><rect x="13" y="6" width="10" height="7" /><rect x="3" y="13" width="10" height="7" /><rect x="13" y="20" width="10" height="7" /><rect x="3" y="27" width="10" height="7" /><rect x="13" y="34" width="10" height="7" /><rect x="3" y="41" width="10" height="7" /></g>
            <path d="M22 26L46 50M46 26L22 50" stroke="#e00000" strokeWidth="8" strokeLinecap="round" />
          </FloatIcon>
        </Floating>
        <Compass viewBox="3660 1950 140 130">
          <path d="M3691 2000A52 52 0 0 1 3742 1964" fill="none" stroke="#000" strokeWidth="8" strokeLinecap="round" />
          <polygon points="3668,1984 3685,1980 3686,1993 3677,1999" fill="#000" />
          <circle cx="3740" cy="2015" r="50" fill="url(#cmp)" stroke="#333" strokeWidth="3" />
          <circle cx="3740" cy="2015" r="47.5" fill="none" stroke="#fff" strokeWidth="2.5" />
          <g fill="#fff">
            <polygon points="3753,1968 3776,1973 3754,1987" />
            <polygon points="3788,2026 3782,2050 3770,2030" />
            <polygon points="3728,2062 3702,2056 3727,2043" />
            <polygon points="3693,2004 3698,1979 3711,2003" />
          </g>
        </Compass>
      </Canvas>
      <StatusBar>
        <StatusDots>...</StatusDots>
        <StatusVersion>1.0.0007</StatusVersion>
      </StatusBar>
    </Window>
  );
}
